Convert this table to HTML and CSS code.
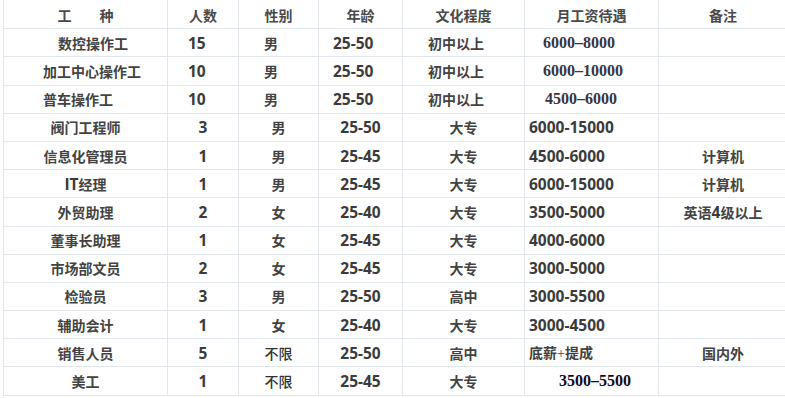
FILE: index.html
```html
<!DOCTYPE html>
<html lang="zh-CN">
<head>
<meta charset="utf-8">
<title>招聘岗位</title>
<link rel="stylesheet" href="styles.css">
</head>
<body>
<table class="jobs">
  <colgroup>
    <col class="c1"><col class="c2"><col class="c3"><col class="c4"><col class="c5"><col class="c6"><col class="c7">
  </colgroup>
  <thead>
    <tr class="head">
      <th>工　　种</th><th>人数</th><th>性别</th><th>年龄</th><th>文化程度</th><th>月工资待遇</th><th>备注</th>
    </tr>
  </thead>
  <tbody>
    <tr class="pre">
      <td class="p-name p-first">数控操作工</td><td class="num p-count">15</td><td class="p-sex">男</td><td class="num p-age">25-50</td><td class="p-edu">初中以上</td><td class="serif p-pay">6000–8000</td><td></td>
    </tr>
    <tr class="pre">
      <td class="p-name">加工中心操作工</td><td class="num p-count">10</td><td class="p-sex">男</td><td class="num p-age">25-50</td><td class="p-edu">初中以上</td><td class="serif p-pay">6000–10000</td><td></td>
    </tr>
    <tr class="pre">
      <td class="p-name">普车操作工</td><td class="num p-count">10</td><td class="p-sex">男</td><td class="num p-age">25-50</td><td class="p-edu">初中以上</td><td class="serif p-pay p-pay3">4500–6000</td><td></td>
    </tr>
    <tr><td>阀门工程师</td><td class="num">3</td><td>男</td><td class="num">25-50</td><td>大专</td><td class="num pay">6000-15000</td><td></td></tr>
    <tr><td>信息化管理员</td><td class="num">1</td><td>男</td><td class="num">25-45</td><td>大专</td><td class="num pay">4500-6000</td><td>计算机</td></tr>
    <tr><td><span class="num">IT</span>经理</td><td class="num">1</td><td>男</td><td class="num">25-45</td><td>大专</td><td class="num pay">6000-15000</td><td>计算机</td></tr>
    <tr><td>外贸助理</td><td class="num">2</td><td>女</td><td class="num">25-40</td><td>大专</td><td class="num pay">3500-5000</td><td>英语<span class="num">4</span>级以上</td></tr>
    <tr><td>董事长助理</td><td class="num">1</td><td>女</td><td class="num">25-45</td><td>大专</td><td class="num pay">4000-6000</td><td></td></tr>
    <tr><td>市场部文员</td><td class="num">2</td><td>女</td><td class="num">25-45</td><td>大专</td><td class="num pay">3000-5000</td><td></td></tr>
    <tr><td>检验员</td><td class="num">3</td><td>男</td><td class="num">25-50</td><td>高中</td><td class="num pay">3000-5500</td><td></td></tr>
    <tr><td>辅助会计</td><td class="num">1</td><td>女</td><td class="num">25-40</td><td>大专</td><td class="num pay">3000-4500</td><td></td></tr>
    <tr><td>销售人员</td><td class="num">5</td><td class="light">不限</td><td class="num">25-50</td><td>高中</td><td class="pay mixed">底薪<span class="plus">+</span>提成</td><td>国内外</td></tr>
    <tr><td>美工</td><td class="num">1</td><td class="light">不限</td><td class="num">25-45</td><td>大专</td><td class="serif last-pay">3500–5500</td><td></td></tr>
  </tbody>
</table>
</body>
</html>
```

FILE: styles.css
```css
html, body {
  margin: 0;
  padding: 0;
  background: #ffffff;
}

body {
  padding-left: 3px;
  font-family: "Noto Sans CJK SC", "Open Sans", sans-serif;
  color: #434343;
}

.jobs {
  border-collapse: collapse;
  table-layout: fixed;
  width: 784px;
  font-size: 14px;
}

.c1 { width: 164px; }
.c2 { width: 71px; }
.c3 { width: 80px; }
.c4 { width: 84px; }
.c5 { width: 122px; }
.c6 { width: 134px; }
.c7 { width: 129px; }

.jobs th,
.jobs td {
  border: 1px solid #e1e5ec;
  height: 27.2px;
  padding: 0;
  text-align: center;
  vertical-align: middle;
  white-space: nowrap;
  font-weight: 700;
  line-height: 20px;
}

.jobs thead th {
  border-top-color: transparent;
  font-weight: 700;
  color: #4a4a4a;
}

.num {
  font-family: "Open Sans", "Noto Sans CJK SC", sans-serif;
  font-size: 15.5px;
  font-weight: 700;
  color: #3b3b3b;
}

.pay {
  text-align: left !important;
  padding-left: 4px !important;
}

.mixed {
  color: #404040;
}

.plus {
  font-family: "Liberation Serif", serif;
  font-weight: 400;
}

.light {
  font-weight: 500 !important;
  color: #333333;
}

.serif {
  font-family: "Liberation Serif", "Noto Sans CJK SC", serif;
  font-size: 16px;
  color: #3b3341;
}

.pre td {
  text-align: left;
}

.pre .p-name { padding-left: 39px; }
.pre .p-first { padding-left: 54px; }
.pre .p-count { padding-left: 20px; }
.pre .p-sex { padding-left: 25px; }
.pre .p-age { padding-left: 14px; }
.pre .p-edu { padding-left: 25px; }
.pre .p-pay { padding-left: 18px; }
.pre .p-pay3 { padding-left: 20px; }

.last-pay {
  color: #14081f;
  text-align: left !important;
  padding-left: 34px !important;
}
```
